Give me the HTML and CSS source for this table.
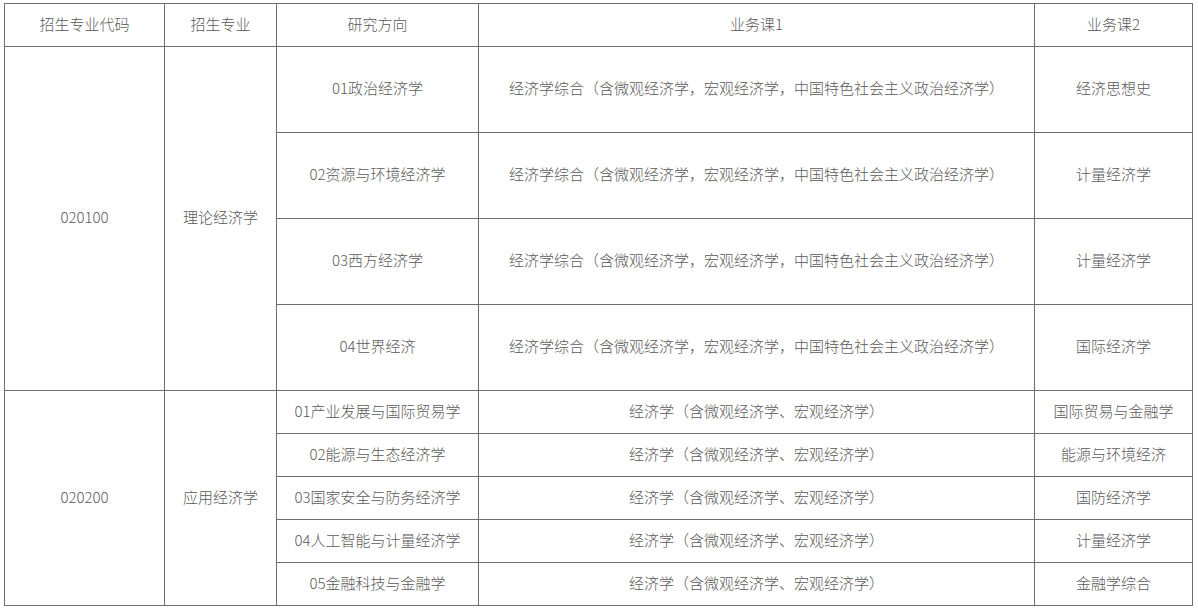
FILE: index.html
```html
<!DOCTYPE html>
<html lang="zh">
<head>
<meta charset="utf-8">
<link rel="stylesheet" href="styles.css">
</head>
<body>
<table class="plan">
  <colgroup>
    <col class="c-code"><col class="c-major"><col class="c-dir"><col class="c-course1"><col class="c-course2">
  </colgroup>
  <tr class="row-head">
    <td>招生专业代码</td><td>招生专业</td><td>研究方向</td><td>业务课1</td><td>业务课2</td>
  </tr>
  <tr class="row-tall">
    <td rowspan="4">020100</td><td rowspan="4">理论经济学</td>
    <td>01政治经济学</td><td>经济学综合（含微观经济学，宏观经济学，中国特色社会主义政治经济学）</td><td>经济思想史</td>
  </tr>
  <tr class="row-tall">
    <td>02资源与环境经济学</td><td>经济学综合（含微观经济学，宏观经济学，中国特色社会主义政治经济学）</td><td>计量经济学</td>
  </tr>
  <tr class="row-tall">
    <td>03西方经济学</td><td>经济学综合（含微观经济学，宏观经济学，中国特色社会主义政治经济学）</td><td>计量经济学</td>
  </tr>
  <tr class="row-tall">
    <td>04世界经济</td><td>经济学综合（含微观经济学，宏观经济学，中国特色社会主义政治经济学）</td><td>国际经济学</td>
  </tr>
  <tr class="row-short">
    <td rowspan="5">020200</td><td rowspan="5">应用经济学</td>
    <td>01产业发展与国际贸易学</td><td>经济学（含微观经济学、宏观经济学）</td><td>国际贸易与金融学</td>
  </tr>
  <tr class="row-short">
    <td>02能源与生态经济学</td><td>经济学（含微观经济学、宏观经济学）</td><td>能源与环境经济</td>
  </tr>
  <tr class="row-short">
    <td>03国家安全与防务经济学</td><td>经济学（含微观经济学、宏观经济学）</td><td>国防经济学</td>
  </tr>
  <tr class="row-short">
    <td>04人工智能与计量经济学</td><td>经济学（含微观经济学、宏观经济学）</td><td>计量经济学</td>
  </tr>
  <tr class="row-short">
    <td>05金融科技与金融学</td><td>经济学（含微观经济学、宏观经济学）</td><td>金融学综合</td>
  </tr>
</table>
</body>
</html>
```
FILE: styles.css
```css
html, body {
  background: #ffffff;
}
body {
  margin: 3px 0 0 4px;
  font-family: "Noto Sans CJK SC", "Noto Sans", sans-serif;
  font-size: 15px;
  font-weight: 300;
  color: #5a5a5a;
}
.plan {
  border-collapse: collapse;
  table-layout: fixed;
  width: 1189px;
  border: 1px solid #000000;
}
.plan td {
  border: 1px solid #6e6e6e;
  text-align: center;
  vertical-align: middle;
  padding: 0 0 3px 0;
  line-height: 20px;
  white-space: nowrap;
}
.c-code { width: 160px; }
.c-major { width: 112px; }
.c-dir { width: 202px; }
.c-course1 { width: 556px; }
.c-course2 { width: 158px; }
.row-head { height: 43px; }
.row-tall { height: 86px; }
.row-short { height: 43px; }
```
